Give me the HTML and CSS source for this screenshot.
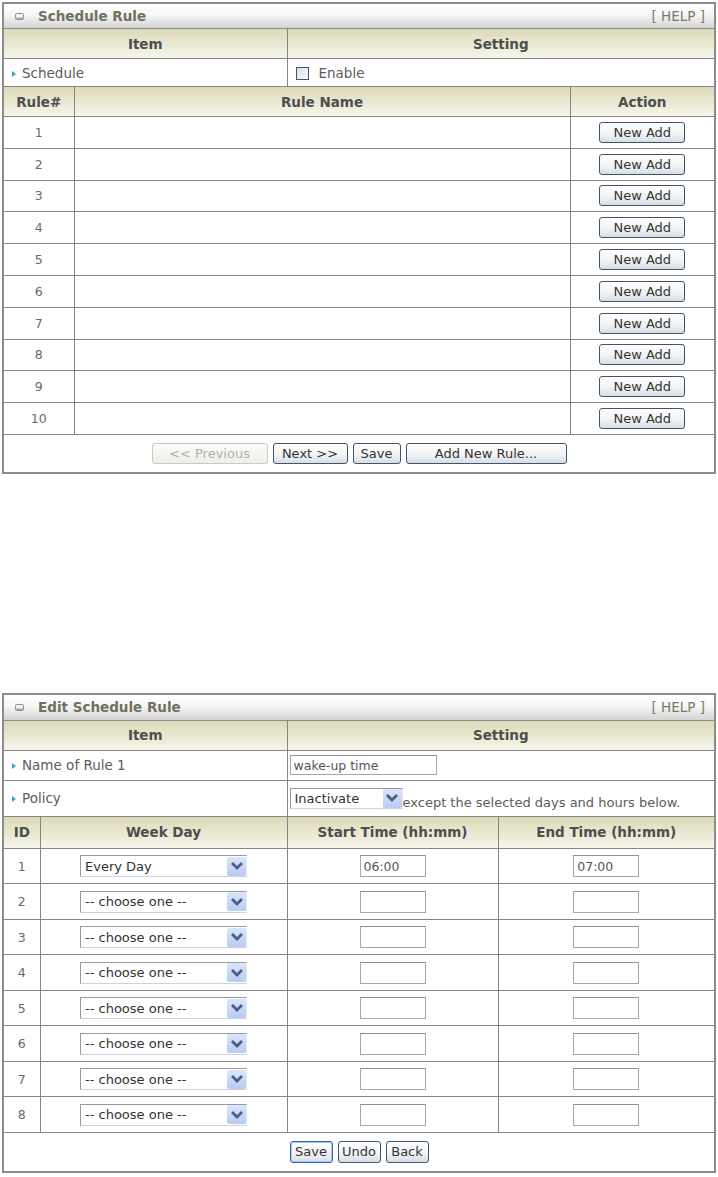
FILE: index.html
```html
<!DOCTYPE html>
<html lang="en">
<head>
    <meta charset="UTF-8">
    <title>Schedule Rule</title>
    <link rel="stylesheet" href="styles.css">
</head>
<body>
<div class="page">

    <!-- schedule rule list -->
    <div class="panel">
        <div class="panel-title">
            <span class="title-text">
                <svg class="title-icon" viewBox="0 0 9 7"><rect x="0.5" y="0.5" width="8" height="6" rx="1" fill="#f2f2f2" stroke="#8f8f8f"/><rect x="1" y="4.5" width="7" height="1.5" fill="#a8a8a8"/></svg>
                Schedule Rule
            </span>
            <span class="help">[ HELP ]</span>
        </div>
        <table class="grid">
            <colgroup><col class="w-item"><col></colgroup>
            <tr><th>Item</th><th>Setting</th></tr>
            <tr class="row-sched">
                <td class="label"><span class="arrow"></span>Schedule</td>
                <td class="setting"><span class="check"></span>Enable</td>
            </tr>
        </table>
        <table class="grid rules">
            <colgroup><col class="w-num"><col><col class="w-action"></colgroup>
            <tr><th>Rule#</th><th>Rule Name</th><th>Action</th></tr>
            <tr><td class="num">1</td><td></td><td class="center"><button class="btn btn-add">New Add</button></td></tr>
            <tr><td class="num">2</td><td></td><td class="center"><button class="btn btn-add">New Add</button></td></tr>
            <tr><td class="num">3</td><td></td><td class="center"><button class="btn btn-add">New Add</button></td></tr>
            <tr><td class="num">4</td><td></td><td class="center"><button class="btn btn-add">New Add</button></td></tr>
            <tr><td class="num">5</td><td></td><td class="center"><button class="btn btn-add">New Add</button></td></tr>
            <tr><td class="num">6</td><td></td><td class="center"><button class="btn btn-add">New Add</button></td></tr>
            <tr><td class="num">7</td><td></td><td class="center"><button class="btn btn-add">New Add</button></td></tr>
            <tr><td class="num">8</td><td></td><td class="center"><button class="btn btn-add">New Add</button></td></tr>
            <tr><td class="num">9</td><td></td><td class="center"><button class="btn btn-add">New Add</button></td></tr>
            <tr><td class="num">10</td><td></td><td class="center"><button class="btn btn-add">New Add</button></td></tr>
        </table>
        <div class="panel-foot">
            <button class="btn btn-prev" disabled>&lt;&lt; Previous</button>
            <button class="btn btn-next">Next &gt;&gt;</button>
            <button class="btn btn-save">Save</button>
            <button class="btn btn-new">Add New Rule...</button>
        </div>
    </div>

    <!-- edit one rule -->
    <div class="panel panel-edit">
        <div class="panel-title">
            <span class="title-text">
                <svg class="title-icon" viewBox="0 0 9 7"><rect x="0.5" y="0.5" width="8" height="6" rx="1" fill="#f2f2f2" stroke="#8f8f8f"/><rect x="1" y="4.5" width="7" height="1.5" fill="#a8a8a8"/></svg>
                Edit Schedule Rule
            </span>
            <span class="help">[ HELP ]</span>
        </div>
        <table class="grid">
            <colgroup><col class="w-item"><col></colgroup>
            <tr><th>Item</th><th>Setting</th></tr>
            <tr class="row-name">
                <td class="label"><span class="arrow"></span>Name of Rule 1</td>
                <td class="field"><input class="text-input name-input" type="text" value="wake-up time"></td>
            </tr>
            <tr class="row-policy">
                <td class="label"><span class="arrow"></span>Policy</td>
                <td class="field">
                    <span class="select select-policy"><span class="select-text">Inactivate</span><span class="select-btn"><svg viewBox="0 0 16 16"><path d="M3 5l5 5 5-5"/></svg></span></span><span class="policy-note">except the selected days and hours below.</span>
                </td>
            </tr>
        </table>
        <table class="grid days">
            <colgroup><col class="w-id"><col class="w-day"><col class="w-start"><col></colgroup>
            <tr><th>ID</th><th>Week Day</th><th>Start Time (hh:mm)</th><th>End Time (hh:mm)</th></tr>
            <tr>
                <td class="num">1</td>
                <td class="center"><span class="select select-day"><span class="select-text">Every Day</span><span class="select-btn"><svg viewBox="0 0 16 16"><path d="M3 5l5 5 5-5"/></svg></span></span></td>
                <td class="center"><input class="text-input time-input" type="text" value="06:00"></td>
                <td class="center"><input class="text-input time-input" type="text" value="07:00"></td>
            </tr>
            <tr>
                <td class="num">2</td>
                <td class="center"><span class="select select-day"><span class="select-text">-- choose one --</span><span class="select-btn"><svg viewBox="0 0 16 16"><path d="M3 5l5 5 5-5"/></svg></span></span></td>
                <td class="center"><input class="text-input time-input" type="text"></td>
                <td class="center"><input class="text-input time-input" type="text"></td>
            </tr>
            <tr>
                <td class="num">3</td>
                <td class="center"><span class="select select-day"><span class="select-text">-- choose one --</span><span class="select-btn"><svg viewBox="0 0 16 16"><path d="M3 5l5 5 5-5"/></svg></span></span></td>
                <td class="center"><input class="text-input time-input" type="text"></td>
                <td class="center"><input class="text-input time-input" type="text"></td>
            </tr>
            <tr>
                <td class="num">4</td>
                <td class="center"><span class="select select-day"><span class="select-text">-- choose one --</span><span class="select-btn"><svg viewBox="0 0 16 16"><path d="M3 5l5 5 5-5"/></svg></span></span></td>
                <td class="center"><input class="text-input time-input" type="text"></td>
                <td class="center"><input class="text-input time-input" type="text"></td>
            </tr>
            <tr>
                <td class="num">5</td>
                <td class="center"><span class="select select-day"><span class="select-text">-- choose one --</span><span class="select-btn"><svg viewBox="0 0 16 16"><path d="M3 5l5 5 5-5"/></svg></span></span></td>
                <td class="center"><input class="text-input time-input" type="text"></td>
                <td class="center"><input class="text-input time-input" type="text"></td>
            </tr>
            <tr>
                <td class="num">6</td>
                <td class="center"><span class="select select-day"><span class="select-text">-- choose one --</span><span class="select-btn"><svg viewBox="0 0 16 16"><path d="M3 5l5 5 5-5"/></svg></span></span></td>
                <td class="center"><input class="text-input time-input" type="text"></td>
                <td class="center"><input class="text-input time-input" type="text"></td>
            </tr>
            <tr>
                <td class="num">7</td>
                <td class="center"><span class="select select-day"><span class="select-text">-- choose one --</span><span class="select-btn"><svg viewBox="0 0 16 16"><path d="M3 5l5 5 5-5"/></svg></span></span></td>
                <td class="center"><input class="text-input time-input" type="text"></td>
                <td class="center"><input class="text-input time-input" type="text"></td>
            </tr>
            <tr>
                <td class="num">8</td>
                <td class="center"><span class="select select-day"><span class="select-text">-- choose one --</span><span class="select-btn"><svg viewBox="0 0 16 16"><path d="M3 5l5 5 5-5"/></svg></span></span></td>
                <td class="center"><input class="text-input time-input" type="text"></td>
                <td class="center"><input class="text-input time-input" type="text"></td>
            </tr>
        </table>
        <div class="panel-foot">
            <button class="btn btn-default btn-sm">Save</button>
            <button class="btn btn-sm">Undo</button>
            <button class="btn btn-sm">Back</button>
        </div>
    </div>

</div>
</body>
</html>
```

FILE: styles.css
```css
body {
    margin: 0;
    font-family: "DejaVu Sans", Verdana, sans-serif;
    font-size: 13.5px;
    color: #5c5c5c;
    background: #fff;
}

.page {
    padding: 2px 2px 0;
}

.panel {
    border: 2px solid #8c8c8c;
}

.panel-edit {
    margin-top: 219px;
}

.panel-title {
    display: flex;
    justify-content: space-between;
    align-items: center;
    height: 24px;
    padding: 0 9px 0 11px;
    background: linear-gradient(#ffffff 0%, #f6f6f6 45%, #d4d4d4 100%);
    border-bottom: 1px solid #8c8c8c;
    color: #70705e;
}

.panel-edit .panel-title {
    height: 25px;
}

.title-text {
    display: flex;
    align-items: center;
    font-weight: bold;
}

.title-icon {
    width: 9px;
    height: 7px;
    margin-right: 14px;
}

.help {
    color: #7a7a66;
}

/* tables */
.grid {
    width: 100%;
    border-collapse: collapse;
    table-layout: fixed;
}

.grid th,
.grid td {
    border-right: 1px solid #858585;
    border-bottom: 1px solid #858585;
    padding: 0 8px;
}

.grid th:last-child,
.grid td:last-child {
    border-right: 0;
}

.grid th {
    height: 29px;
    background: linear-gradient(#dcdab8, #f6f5ea);
    color: #4e4e4e;
    font-weight: bold;
    text-align: center;
}

.w-item { width: 283px; }
.w-num { width: 70px; }
.w-action { width: 144px; }
.w-id { width: 36px; }
.w-day { width: 247px; }
.w-start { width: 211px; }

.row-sched td { height: 27px; }
.rules td { height: 30.8px; }
.row-name td { height: 29px; }
.row-policy td { height: 35px; }
.days td { height: 34.5px; }
.days th { height: 31px; }

.label {
    padding-left: 9px;
}

.arrow {
    display: inline-block;
    width: 0;
    height: 0;
    border-left: 4px solid #3fa6c0;
    border-top: 3.5px solid transparent;
    border-bottom: 3.5px solid transparent;
    margin-right: 6px;
    vertical-align: 1px;
}

.setting {
    padding-left: 9px;
}

.check {
    display: inline-block;
    width: 11px;
    height: 11px;
    border: 1px solid #3e5674;
    background: linear-gradient(135deg, #d8dfe9, #fbfcfd);
    margin-right: 10px;
    vertical-align: -2px;
}

.num {
    text-align: center;
    font-size: 12.5px;
    color: #6a6a6a;
}

.center {
    text-align: center;
}

.field {
    padding-left: 2px !important;
}

/* buttons */
.btn {
    height: 21px;
    padding: 0 6px;
    font-family: "DejaVu Sans", Verdana, sans-serif;
    font-size: 13px;
    color: #333;
    border: 1px solid #3d5670;
    border-radius: 3px;
    background: linear-gradient(#ffffff, #f1f2f4 60%, #d9dce3);
    vertical-align: middle;
}

.btn:disabled {
    color: #b0b0b0;
    border-color: #c8cac4;
    background: linear-gradient(#fbfbf8, #efefea);
}

.btn-add { width: 86px; }
.btn-prev { width: 116px; }
.btn-next { width: 75px; }
.btn-save { width: 48px; }
.btn-new { width: 161px; }

.btn-sm {
    width: 43px;
    height: 22px;
    padding: 0;
}

.btn-default {
    border-color: #2f66c4;
    box-shadow: inset 0 0 0 1px #a9c6f0;
}

.panel-foot {
    display: flex;
    justify-content: center;
    align-items: center;
    gap: 5px;
    height: 37px;
}

.panel-edit .panel-foot {
    height: 38px;
}

/* form fields */
.text-input {
    box-sizing: border-box;
    height: 21px;
    padding: 0 3px;
    border: 1px solid #a3a8b0;
    border-top-color: #8c9097;
    font-family: "DejaVu Sans", Verdana, sans-serif;
    font-size: 12.5px;
    color: #555;
    background: #fff;
}

.name-input {
    width: 147px;
    height: 20px;
}

.time-input {
    width: 66px;
    height: 22px;
}

.select {
    display: inline-flex;
    align-items: center;
    box-sizing: border-box;
    height: 22px;
    border: 1px solid #9a9a9a;
    border-right-color: #e2e8f2;
    border-bottom-color: #cdd3dd;
    background: #fff;
    color: #333;
    vertical-align: middle;
    text-align: left;
}

.select-text {
    flex: 1;
    padding-left: 4px;
    font-size: 13px;
    white-space: nowrap;
}

.select-btn {
    display: flex;
    align-items: center;
    justify-content: center;
    width: 19px;
    height: 19px;
    border-radius: 2px;
    background: linear-gradient(#dbe5fb, #b9cbf3);
}

.select-btn svg {
    width: 16px;
    height: 16px;
}

.select-btn path {
    fill: none;
    stroke: #4a5f86;
    stroke-width: 2.8;
}

.select-day {
    width: 167px;
}

.select-policy {
    width: 113px;
    height: 21px;
}

.policy-note {
    vertical-align: -4px;
    font-size: 13px;
}
```
